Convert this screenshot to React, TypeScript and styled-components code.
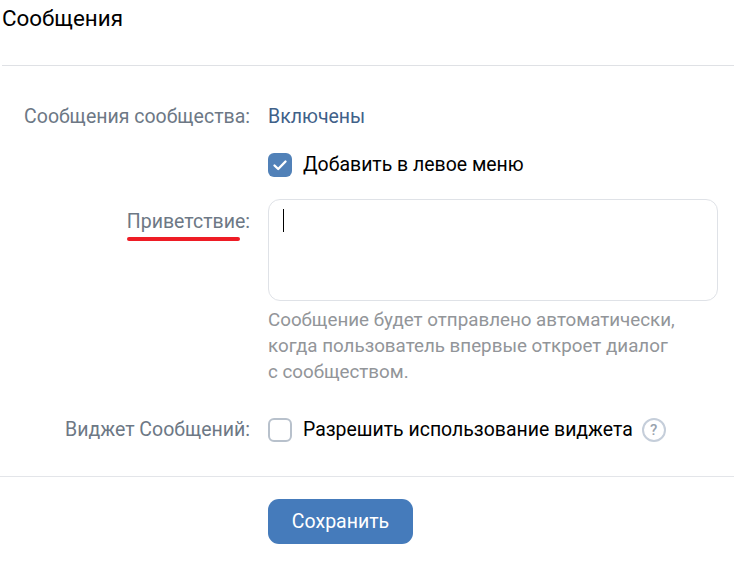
import React from "react";
import styled, { createGlobalStyle } from "styled-components";

const GlobalStyle = createGlobalStyle`
  html, body {
    margin: 0;
    padding: 0;
    background: #fff;
    font-family: Roboto, "Liberation Sans", sans-serif;
  }
`;

const Page = styled.div`
  width: 734px;
  height: 568px;
  overflow: hidden;
`;

const Title = styled.h1`
  margin: 0 0 0 2px;
  padding: 7px 0 0;
  height: 66px;
  box-sizing: border-box;
  font-size: 22.4px;
  line-height: 22px;
  font-weight: 400;
  color: #000;
  border-bottom: 1px solid #dfe1e5;
`;

const Form = styled.div`
  padding: 39px 16px 0 0;
  display: flex;
  flex-direction: column;
`;

const Row = styled.div<{ $mt?: number }>`
  display: grid;
  grid-template-columns: 250px 1fr;
  column-gap: 18px;
  margin-top: ${({ $mt }) => $mt || 0}px;
`;

const Label = styled.div<{ $pt?: number }>`
  padding-top: ${({ $pt }) => $pt || 0}px;
  text-align: right;
  font-size: 19.5px;
  line-height: 24px;
  color: #6d7885;
`;

const Underlined = styled.span`
  position: relative;
  display: inline-block;
  &::after {
    content: "";
    position: absolute;
    left: 0;
    right: 10px;
    bottom: -7px;
    height: 4px;
    border-radius: 2px;
    background: #ee1c25;
  }
`;

const Value = styled.div`
  font-size: 19.5px;
  line-height: 24px;
  color: #3f6189;
`;

const CheckRow = styled.div`
  display: flex;
  align-items: center;
  gap: 11px;
  font-size: 19.45px;
  line-height: 24px;
  color: #000;
`;

const Box = styled.div<{ $checked?: boolean }>`
  width: 24px;
  height: 24px;
  flex: none;
  box-sizing: border-box;
  border-radius: 6px;
  display: flex;
  align-items: center;
  justify-content: center;
  background: ${({ $checked }) => ($checked ? "#5181b8" : "#fff")};
  border: ${({ $checked }) => ($checked ? "none" : "2px solid #b8c1cc")};
`;

const TextBox = styled.div`
  height: 102px;
  box-sizing: border-box;
  border: 1px solid #dfe2e7;
  border-radius: 12px;
  padding: 9px 14px;
`;

const Caret = styled.div`
  width: 1px;
  height: 23px;
  background: #000;
`;

const Hint = styled.div`
  margin-top: 6px;
  font-size: 18.78px;
  line-height: 26px;
  color: #929599;
  white-space: nowrap;
`;

const HelpMark = styled.span`
  width: 24px;
  height: 24px;
  flex: none;
  box-sizing: border-box;
  border: 2px solid #c5ceda;
  border-radius: 50%;
  display: inline-flex;
  align-items: center;
  justify-content: center;
  font-size: 15px;
  font-weight: 500;
  color: #98a2ae;
  margin-left: -2px;
`;

const Footer = styled.div`
  margin-top: 34px;
  border-top: 1px solid #e3e5e9;
  padding: 22px 0 0 268px;
`;

const SaveButton = styled.button`
  width: 145px;
  height: 45px;
  border: 0;
  border-radius: 11px;
  background: #457bbb;
  color: #fff;
  font-family: inherit;
  font-size: 19.5px;
`;

const App = () => (
  <Page>
    <GlobalStyle />
    <Title>Сообщения</Title>
    <Form>
      <Row>
        <Label>Сообщения сообщества:</Label>
        <Value>Включены</Value>
      </Row>
      <Row $mt={24}>
        <div />
        <CheckRow>
          <Box $checked>
            <svg width="16" height="16" viewBox="0 0 16 16" fill="none">
              <path d="M2.5 8.5 6.2 12 13.5 4.5" stroke="#fff" strokeWidth="2.4" strokeLinecap="round" strokeLinejoin="round" />
            </svg>
          </Box>
          Добавить в левое меню
        </CheckRow>
      </Row>
      <Row $mt={22}>
        <Label $pt={11}>
          <Underlined>Приветствие:</Underlined>
        </Label>
        <div>
          <TextBox>
            <Caret />
          </TextBox>
          <Hint>
            Сообщение будет отправлено автоматически,
            <br />
            когда пользователь впервые откроет диалог
            <br />с сообществом.
          </Hint>
        </div>
      </Row>
      <Row $mt={33}>
        <Label>Виджет Сообщений:</Label>
        <CheckRow>
          <Box />
          Разрешить использование виджета
          <HelpMark>?</HelpMark>
        </CheckRow>
      </Row>
    </Form>
    <Footer>
      <SaveButton type="button">Сохранить</SaveButton>
    </Footer>
  </Page>
);

export default App;
